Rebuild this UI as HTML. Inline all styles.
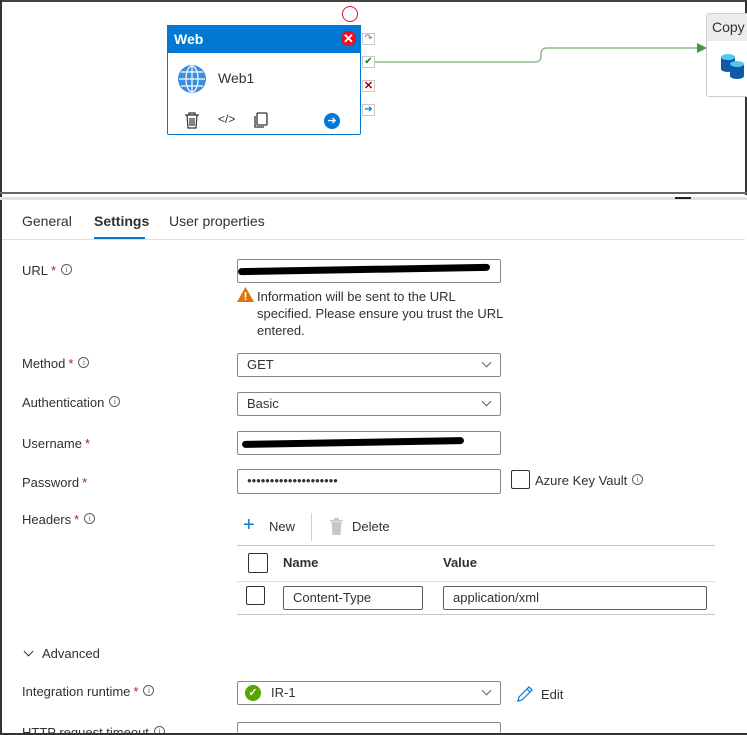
<!DOCTYPE html>
<html style="width:747px;height:735px;overflow:hidden"><head><style>
*{box-sizing:border-box;margin:0;padding:0}
body{width:747px;height:735px;overflow:hidden;background:#fff;font-family:"Segoe UI","Liberation Sans",sans-serif;font-size:13px;color:#323130;position:relative}
.a{position:absolute}
.lbl{position:absolute;left:22px;font-size:13px;color:#323130}
.req{color:#a4262c;margin-left:3px}
.info{display:inline-block;width:11px;height:11px;border:1px solid #605e5c;border-radius:50%;font-size:8px;line-height:9px;text-align:center;color:#605e5c;margin-left:5px;vertical-align:3px;font-family:"Liberation Serif",serif}
.inp{position:absolute;border:1px solid #8a8886;border-radius:2px;background:#fff;font-size:13px;padding-left:9px;line-height:21px}
.chev{position:absolute;right:10px;top:5px;width:7px;height:7px;border-right:1px solid #605e5c;border-bottom:1px solid #605e5c;transform:rotate(45deg)}
.cb{position:absolute;border:1px solid #323130;border-radius:2px;background:#fff}
.scr{position:absolute;height:7px;background:#000;border-radius:4px}
</style></head><body>
<div class="a" style="left:0;top:0;width:747px;height:2px;background:#444"></div>
<div class="a" style="left:0;top:0;width:2px;height:735px;background:#333"></div>
<div class="a" style="left:745px;top:0;width:2px;height:195px;background:#333"></div>
<div class="a" style="left:0;top:192px;width:747px;height:2px;background:#666"></div>
<div class="a" style="left:0;top:197px;width:747px;height:3px;background:#e1e1e1"></div>
<div class="a" style="left:675px;top:197px;width:16px;height:2px;background:#222"></div>

<div class="a" style="left:342px;top:6px;width:16px;height:16px;border:1px solid #e81123;border-radius:50%"></div>
<div class="a" style="left:167px;top:25px;width:194px;height:110px;border:1px solid #0078d4;border-radius:2px;background:#fff"></div>
<div class="a" style="left:167px;top:25px;width:194px;height:28px;background:#0078d4;color:#fff;font-weight:600;font-size:14px;padding:6px 0 0 7px">Web</div>
<div class="a" style="left:341px;top:31px;width:15px;height:15px;border-radius:50%;background:#e81123;color:#fff;font-size:13px;line-height:15px;text-align:center;font-weight:bold">✕</div>
<svg class="a" style="left:177px;top:64px" width="30" height="30" viewBox="0 0 30 30"><circle cx="15" cy="15" r="14" fill="#3b8de0"/><g fill="none" stroke="#fff" stroke-width="1.2"><ellipse cx="15" cy="15" rx="6" ry="13"/><line x1="15" y1="2" x2="15" y2="28"/><line x1="2" y1="15" x2="28" y2="15"/><path d="M4 8h22M4 22h22"/></g></svg>
<div class="a" style="left:218px;top:70px;font-size:14px">Web1</div>
<svg class="a" style="left:184px;top:112px" width="16" height="17" viewBox="0 0 16 17"><g fill="none" stroke="#323130" stroke-width="1.2"><path d="M1 3h14M5 3V1h6v2M3 3l1 13h8l1-13M6 6v8M8 6v8M10 6v8"/></g></svg>
<div class="a" style="left:218px;top:112px;font-size:12px">&lt;/&gt;</div>
<svg class="a" style="left:253px;top:112px" width="15" height="16" viewBox="0 0 15 16"><g fill="none" stroke="#323130" stroke-width="1.3"><rect x="4" y="1" width="10" height="12" rx="1"/><path d="M2 4v11h9"/></g></svg>
<div class="a" style="left:324px;top:113px;width:16px;height:16px;border-radius:50%;background:#0078d4;color:#fff;font-size:11px;line-height:16px;text-align:center">➔</div>
<div class="a" style="left:362px;top:33px;width:13px;height:12px;border:1px solid #c8c8c8;background:#fff;color:#777;font-size:10px;line-height:10px;text-align:center">↷</div>
<div class="a" style="left:362px;top:56px;width:13px;height:12px;border:1px solid #c8c8c8;background:#fff;color:#107c10;font-size:10px;line-height:10px;text-align:center">✔</div>
<div class="a" style="left:362px;top:80px;width:13px;height:12px;border:1px solid #c8c8c8;background:#fff;color:#a80000;font-size:11px;line-height:10px;text-align:center;font-weight:bold">✕</div>
<div class="a" style="left:362px;top:104px;width:13px;height:12px;border:1px solid #c8c8c8;background:#fff;color:#0078d4;font-size:10px;line-height:10px;text-align:center">➔</div>
<svg class="a" style="left:375px;top:40px" width="335" height="30"><path d="M0 22H160Q166 22 166 16V14Q166 8 172 8H325" fill="none" stroke="#8fbc8f" stroke-width="1.5"/><path d="M322 3L332 8L322 13Z" fill="#4a944a"/></svg>
<div class="a" style="left:706px;top:13px;width:45px;height:84px;border:1px solid #ccc;border-radius:3px;background:#fff"></div>
<div class="a" style="left:707px;top:14px;width:40px;height:27px;background:#ececec;font-size:14px;padding:5px 0 0 5px">Copy</div>
<svg class="a" style="left:720px;top:53px" width="27" height="30"><ellipse cx="8" cy="4" rx="7" ry="3" fill="#50c8f0"/><path d="M1 4v12a7 3 0 0 0 14 0V4a7 3 0 0 1-14 0z" fill="#0f5aa8"/><ellipse cx="17" cy="11" rx="7" ry="3" fill="#50c8f0"/><path d="M10 11v12a7 3 0 0 0 14 0V11a7 3 0 0 1-14 0z" fill="#0f5aa8"/></svg>

<div class="a" style="left:22px;top:213px;font-size:14px">General</div>
<div class="a" style="left:94px;top:213px;font-size:14px;font-weight:600">Settings</div>
<div class="a" style="left:169px;top:213px;font-size:14px">User properties</div>
<div class="a" style="left:2px;top:239px;width:743px;height:1px;background:#e1dfdd"></div>
<div class="a" style="left:94px;top:237px;width:51px;height:2px;background:#0078d4"></div>

<div class="lbl" style="top:263px">URL<span class="req">*</span><span class="info">i</span></div>
<div class="inp" style="left:237px;top:259px;width:264px;height:24px"></div>
<div class="scr" style="left:238px;top:266px;width:252px;transform:rotate(-1deg)"></div>
<svg class="a" style="left:237px;top:287px" width="17" height="15"><path d="M8.5 0L17 15H0Z" fill="#d97706"/><rect x="7.7" y="5" width="1.6" height="5.5" fill="#fff"/><rect x="7.7" y="11.5" width="1.6" height="1.6" fill="#fff"/></svg>
<div class="a" style="left:257px;top:288px;width:250px;line-height:17px;font-size:13px">Information will be sent to the URL specified. Please ensure you trust the URL entered.</div>

<div class="lbl" style="top:356px">Method<span class="req">*</span><span class="info">i</span></div>
<div class="inp" style="left:237px;top:353px;width:264px;height:24px">GET<div class="chev"></div></div>
<div class="lbl" style="top:395px">Authentication<span class="info">i</span></div>
<div class="inp" style="left:237px;top:392px;width:264px;height:24px">Basic<div class="chev"></div></div>
<div class="lbl" style="top:436px">Username<span class="req">*</span></div>
<div class="inp" style="left:237px;top:431px;width:264px;height:24px"></div>
<div class="scr" style="left:242px;top:439px;width:222px;transform:rotate(-1deg)"></div>
<div class="lbl" style="top:475px">Password<span class="req">*</span></div>
<div class="inp" style="left:237px;top:469px;width:264px;height:25px;font-size:8px;letter-spacing:-0.3px">●●●●●●●●●●●●●●●●●●●●</div>
<div class="cb" style="left:511px;top:470px;width:19px;height:19px"></div>
<div class="a" style="left:535px;top:473px">Azure Key Vault<span class="info">i</span></div>

<div class="lbl" style="top:512px">Headers<span class="req">*</span><span class="info">i</span></div>
<div class="a" style="left:243px;top:515px;font-size:20px;color:#0078d4;font-weight:300;line-height:20px">+</div>
<div class="a" style="left:269px;top:519px">New</div>
<div class="a" style="left:311px;top:513px;width:1px;height:28px;background:#d0d0d0"></div>
<svg class="a" style="left:330px;top:518px" width="13" height="17"><g fill="#c8c6c4"><rect x="0" y="2" width="13" height="1.5"/><rect x="4" y="0" width="5" height="2"/><path d="M1.5 4h10l-1 13h-8z"/></g></svg>
<div class="a" style="left:352px;top:519px">Delete</div>
<div class="a" style="left:237px;top:545px;width:478px;height:1px;background:#c8c6c4"></div>
<div class="cb" style="left:248px;top:553px;width:20px;height:20px"></div>
<div class="a" style="left:283px;top:555px;font-weight:600">Name</div>
<div class="a" style="left:443px;top:555px;font-weight:600">Value</div>
<div class="a" style="left:237px;top:581px;width:478px;height:1px;background:#e1dfdd"></div>
<div class="cb" style="left:246px;top:586px;width:19px;height:19px"></div>
<div class="inp" style="left:283px;top:586px;width:140px;height:24px;border-color:#605e5c">Content-Type</div>
<div class="inp" style="left:443px;top:586px;width:264px;height:24px;border-color:#605e5c">application/xml</div>
<div class="a" style="left:237px;top:614px;width:478px;height:1px;background:#c8c6c4"></div>

<div class="a" style="left:25px;top:648px;width:7px;height:7px;border-right:1px solid #323130;border-bottom:1px solid #323130;transform:rotate(45deg)"></div>
<div class="a" style="left:42px;top:646px">Advanced</div>
<div class="lbl" style="top:684px">Integration runtime<span class="req">*</span><span class="info">i</span></div>
<div class="inp" style="left:237px;top:681px;width:264px;height:24px;padding-left:33px">IR-1<div class="chev"></div></div>
<div class="a" style="left:245px;top:685px;width:16px;height:16px;border-radius:50%;background:#57a300;color:#fff;font-size:11px;line-height:16px;text-align:center;font-weight:bold">✓</div>
<svg class="a" style="left:516px;top:685px" width="18" height="18"><path d="M2 16l1-4L13 2l3 3L6 15z M11 4l3 3" fill="none" stroke="#0078d4" stroke-width="1.2"/></svg>
<div class="a" style="left:541px;top:687px">Edit</div>
<div class="lbl" style="top:725px">HTTP request timeout<span class="info">i</span></div>
<div class="inp" style="left:237px;top:722px;width:264px;height:11px;border-bottom:none"></div>
<div class="a" style="left:0;top:733px;width:747px;height:2px;background:#333"></div>
</body></html>
